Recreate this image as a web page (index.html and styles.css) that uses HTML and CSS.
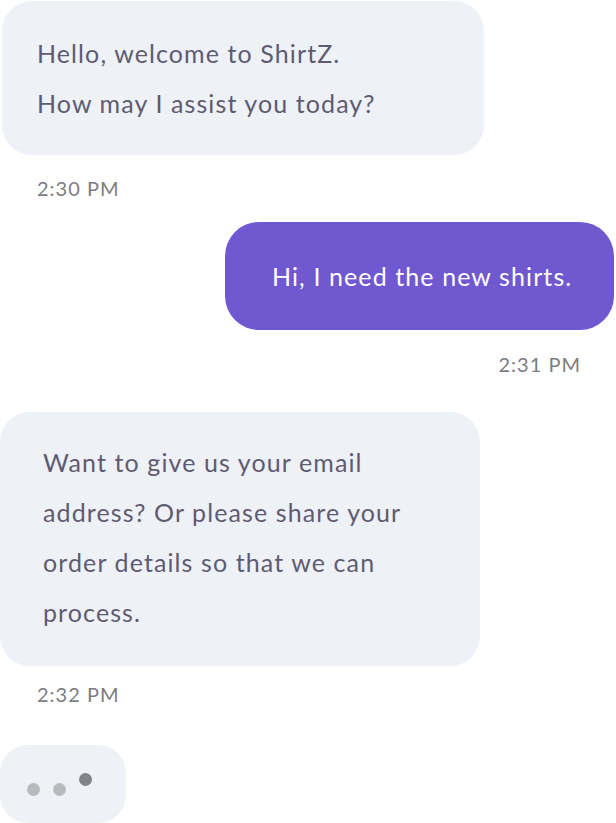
FILE: index.html
```html
<!DOCTYPE html>
<html lang="en">
<head>
<meta charset="utf-8">
<title>ShirtZ chat</title>
<link rel="stylesheet" href="styles.css">
</head>
<body>
<div class="chat">
  <div class="bubble bot first">
    <p>Hello, welcome to ShirtZ.</p>
    <p>How may I assist you today?</p>
  </div>
  <div class="time left t1">2:30 PM</div>

  <div class="bubble user">
    <p>Hi, I need the new shirts.</p>
  </div>
  <div class="time right t2">2:31 PM</div>

  <div class="bubble bot second">
    <p>Want to give us your email address? Or please share your order details so that we can process.</p>
  </div>
  <div class="time left t3">2:32 PM</div>

  <div class="typing">
    <span class="dot"></span>
    <span class="dot"></span>
    <span class="dot up"></span>
  </div>
</div>
</body>
</html>
```

FILE: styles.css
```css
html, body {
  margin: 0;
  padding: 0;
  background: #ffffff;
}

body {
  width: 616px;
  font-family: Lato, "Open Sans", sans-serif;
}

.chat {
  display: flex;
  flex-direction: column;
  padding-top: 1px;
}

.bubble p {
  margin: 0;
}

.bubble {
  box-sizing: border-box;
  font-size: 25px;
  line-height: 50px;
  letter-spacing: 1.1px;
}

.bot {
  background: #eef1f6;
  color: #5f5b72;
}

.first {
  margin-left: 2px;
  width: 482px;
  padding: 27px 35px;
  border-radius: 30px;
}

.user {
  align-self: flex-end;
  margin-right: 2px;
  width: 389px;
  height: 108px;
  margin-top: 22px;
  background: #6f58d0;
  color: #ffffff;
  border-radius: 34px;
  display: flex;
  align-items: center;
  padding-left: 47px;
}

.second {
  width: 480px;
  padding: 25px 50px 29px 43px;
  border-radius: 30px;
  margin-top: 36px;
}

.time {
  font-size: 20px;
  line-height: 24px;
  letter-spacing: 1px;
  color: #7d7d7f;
}

.left {
  align-self: flex-start;
  margin-left: 37px;
}

.right {
  align-self: flex-end;
  margin-right: 35px;
}

.t1 {
  margin-top: 21px;
}

.t2 {
  margin-top: 22px;
}

.t3 {
  margin-top: 16px;
}

.typing {
  align-self: flex-start;
  margin-top: 39px;
  width: 126px;
  height: 78px;
  box-sizing: border-box;
  background: #eef1f6;
  border-radius: 28px;
  display: flex;
  align-items: center;
  gap: 13px;
  padding: 10px 0 0 27px;
}

.dot {
  width: 13px;
  height: 13px;
  border-radius: 50%;
  background: #b8babe;
}

.dot.up {
  background: #818489;
  transform: translateY(-10px);
}
```
